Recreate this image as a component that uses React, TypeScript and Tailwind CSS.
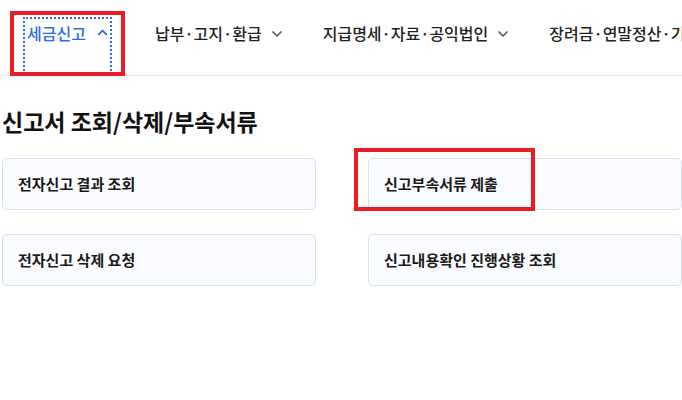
import { ChevronDown, ChevronUp } from 'lucide-react';

const navItems = [
  { label: '세금신고', active: true },
  { label: '납부·고지·환급', active: false },
  { label: '지급명세·자료·공익법인', active: false },
  { label: '장려금·연말정산·기부금', active: false },
];

const menus = [
  '전자신고 결과 조회',
  '신고부속서류 제출',
  '전자신고 삭제 요청',
  '신고내용확인 진행상황 조회',
];

export default function App() {
  return (
    <div
      className="relative h-[400px] w-[682px] overflow-hidden bg-white text-[#222]"
      style={{ fontFamily: '"Noto Sans CJK KR", "Noto Sans", sans-serif' }}
    >
      {/* Top nav */}
      <nav className="flex h-[76px] items-start whitespace-nowrap border-b border-[#e6e6e6] pl-[23px]">
        {navItems.map((item) =>
          item.active ? (
            <button
              key={item.label}
              className="mt-[17px] mr-[43px] flex h-[58px] w-[89px] shrink-0 items-start gap-[9px] border-2 border-dotted border-[#2f6ae6] pl-[2px] pt-[2px] text-[16px] font-medium leading-[24px] text-[#2f6ae6]"
            >
              {item.label}
              <ChevronUp className="mt-[3px] h-[17px] w-[17px]" strokeWidth={3} />
            </button>
          ) : (
            <div
              key={item.label}
              className="mt-[21px] mr-[38px] flex shrink-0 items-start gap-[7px] text-[16px] font-medium leading-[24px]"
            >
              {item.label}
              <ChevronDown className="mt-[5px] h-[16px] w-[16px] text-[#555]" strokeWidth={2.5} />
            </div>
          ),
        )}
      </nav>

      {/* Content */}
      <div className="px-[2px] pt-[29px]">
        <h1 className="text-[23px] font-bold leading-[32px] text-[#111]">
          신고서 조회/삭제/부속서류
        </h1>
        <div className="mt-[21px] grid grid-cols-[314px_314px] gap-x-[52px] gap-y-[24px]">
          {menus.map((m) => (
            <div
              key={m}
              className="flex h-[52px] items-center rounded-[5px] border border-[#d3e0f7] bg-[#fbfcff] px-[15px] text-[15px] font-semibold text-[#1a1a1a]"
            >
              {m}
            </div>
          ))}
        </div>
      </div>

      {/* Annotation boxes */}
      <div className="pointer-events-none absolute left-[10px] top-[11px] h-[65px] w-[115px] border-4 border-[#ec1c24]" />
      <div className="pointer-events-none absolute left-[354px] top-[148px] h-[63px] w-[181px] border-4 border-[#ec1c24]" />
    </div>
  );
}
